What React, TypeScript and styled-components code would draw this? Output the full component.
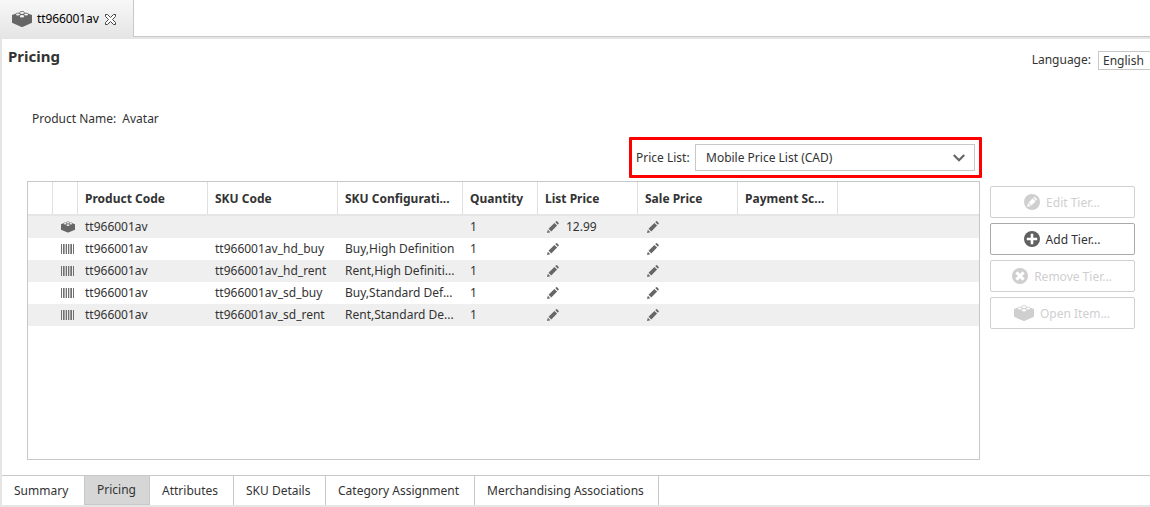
import React from "react";
import styled, { createGlobalStyle } from "styled-components";

const Global = createGlobalStyle`
  * { box-sizing: border-box; }
  body {
    margin: 0;
    background: #fff;
    color: #333;
    font: 12px/16px "Noto Sans", "Open Sans", sans-serif;
    overflow: hidden;
  }
`;

const Window = styled.div`
  width: 1150px;
  height: 507px;
  display: flex;
  flex-direction: column;
  overflow: hidden;
`;

const EditorTabs = styled.div`
  height: 39px;
  flex: none;
  display: flex;
  background: #e5e5e5;
`;

const EditorTab = styled.div`
  width: 134px;
  height: 37px;
  display: flex;
  align-items: center;
  padding: 1px 0 0 12px;
  border-right: 1px solid #c8c8c8;
  background: linear-gradient(#f8f8f8, #e5e5e5);
  color: #000;
  svg { flex: none; }
`;

const EditorTabLabel = styled.span`
  flex: none;
  width: 73px;
  padding-left: 5px;
  white-space: nowrap;
  letter-spacing: -0.1px;
`;

const TabStripRest = styled.div`
  flex: 1;
  height: 37px;
  background: #fff;
  border-bottom: 1px solid #c8c8c8;
`;

const Editor = styled.div`
  flex: 1;
  min-height: 0;
  display: flex;
  flex-direction: column;
  border-left: 2px solid #e5e5e5;
  border-bottom: 2px solid #e5e5e5;
`;

const TitleRow = styled.div`
  height: 72px;
  display: flex;
  justify-content: space-between;
  padding-left: 6px;
`;

const Title = styled.h1`
  margin: 7px 0 0;
  font-size: 15px;
  line-height: 20px;
  font-weight: 700;
`;

const Language = styled.div`
  display: flex;
  height: 20px;
  margin-top: 12px;
  gap: 7px;
  line-height: 18px;
`;

const LanguageBox = styled.div`
  width: 52px;
  height: 19px;
  padding-left: 4px;
  border: 1px solid #c8c8c8;
  border-right: 0;
`;

const ProductName = styled.div`
  display: flex;
  gap: 6px;
  height: 26px;
  padding-left: 30px;
`;

const PriceListFrame = styled.div`
  width: 353px;
  height: 41px;
  margin-left: 627px;
  display: flex;
  align-items: center;
  justify-content: space-between;
  padding: 0 4px;
  border: 3px solid #fe0000;
  border-radius: 1px;
`;

const Combo = styled.div`
  width: 280px;
  height: 27px;
  display: flex;
  align-items: center;
  justify-content: space-between;
  padding: 0 9px 0 10px;
  border: 1px solid #c8c8c8;
`;

const Main = styled.div`
  display: flex;
  gap: 10px;
  height: 282px;
  padding: 3px 0 0 25px;
`;

const Table = styled.div`
  width: 953px;
  height: 279px;
  border: 1px solid #c8c8c8;
`;

const columns = "25px 25px 130px 130px 125px 75px 100px 100px 100px 1fr";

const HeaderRow = styled.div`
  display: grid;
  grid-template-columns: ${columns};
  height: 34px;
  border-bottom: 2px solid #e5e5e5;
  font-weight: 700;
`;

const HeaderCell = styled.div<{ $last?: boolean }>`
  padding: 9px 6px 0 7px;
  border-right: ${(p) => (p.$last ? "0" : "1px solid #e0e0e0")};
  white-space: nowrap;
  overflow: hidden;
`;

const Row = styled.div<{ $shaded: boolean }>`
  display: grid;
  grid-template-columns: ${columns};
  height: 22px;
  background: ${(p) => (p.$shaded ? "#efefef" : "#fff")};
`;

const Cell = styled.div`
  display: flex;
  align-items: center;
  padding-left: 7px;
  white-space: nowrap;
  overflow: hidden;
`;

const IconCell = styled(Cell)`
  padding-left: 8px;
`;

const PriceCell = styled(Cell)`
  gap: 7px;
  padding-left: 9px;
`;

const Actions = styled.div`
  display: flex;
  flex-direction: column;
  gap: 5px;
  padding-top: 5px;
`;

const ActionButton = styled.button`
  width: 145px;
  height: 32px;
  display: flex;
  align-items: center;
  justify-content: center;
  gap: 6px;
  padding: 0 1px 0 0;
  border: 1px solid #aaa;
  border-radius: 2px;
  background: #fff;
  color: #333;
  font: inherit;
  &:disabled {
    border-color: #d0d0d0;
    color: #cfcfcf;
  }
`;

const ActionLabel = styled.span`
  padding-top: 2px;
`;

const PageTabs = styled.div`
  display: flex;
  height: 30px;
  margin-top: 15px;
  border-top: 1px solid #c8c8c8;
`;

const PageTab = styled.div<{ $width: number; $active?: boolean }>`
  width: ${(p) => p.$width}px;
  height: 29px;
  padding: ${(p) => (p.$active ? 6 : 7)}px 0 0 12px;
  border-right: 1px solid #c8c8c8;
  border-bottom: ${(p) => (p.$active ? "1px solid #c8c8c8" : "0")};
  background: ${(p) => (p.$active ? "#d6d6d6" : "#fff")};
  white-space: nowrap;
`;

function BrickIcon({ width = 20, height = 16, color = "#666", gap = "#f2f2f2" }) {
  return (
    <svg width={width} height={height} viewBox="0 0 20 16">
      <path
        d="M0 4 3.600 2.800Q4.300 1.500 6.300 1.800L7.600 1.400Q8 0 10 0T12.400 1.400L13.700 1.800Q15.700 1.500 16.400 2.800L20 4v7.800L10.500 16h-1L0 11.800z"
        fill={color}
      />
      <g fill={gap}>
        <ellipse cx="10" cy="1.900" rx="2" ry="1.100" />
        <ellipse cx="5.900" cy="3.500" rx="2" ry="1.100" />
        <ellipse cx="14.100" cy="3.500" rx="2" ry="1.100" />
        <ellipse cx="10" cy="5.200" rx="2.200" ry="1.200" />
      </g>
    </svg>
  );
}

function BarcodeIcon() {
  return (
    <svg width="13" height="10" viewBox="0 0 13 10" fill="#707070">
      <path d="M0 0h1v10H0zM2 0h1.600v10H2zM4.700 0h1.300v10H4.700zM7 0h1.300v10H7zM9.300 0h1.700v10H9.300zM12 0h1v10h-1z" />
    </svg>
  );
}

function PencilIcon() {
  return (
    <svg width="12" height="12" viewBox="0 0 12 12" fill="#666">
      <path d="M0 12 .8 8.700 3.300 11.200zM1.500 7.700 7.400 1.900 10.100 4.600 4.300 10.500zM8.200 1.100 9.300.2Q9.700-.1 10.100.3L11.700 1.900Q12 2.300 11.700 2.700L10.900 3.800z" />
    </svg>
  );
}

function CircleIcon({ kind, color }: { kind: "edit" | "add" | "remove"; color: string }) {
  return (
    <svg width="16" height="16" viewBox="0 0 16 16">
      <circle cx="8" cy="8" r="8" fill={color} />
      {kind === "add" && <path d="M8 2.800v10.400M2.800 8h10.400" stroke="#fff" strokeWidth="2.600" />}
      {kind === "remove" && <path d="m4.400 4.400 7.200 7.200m0-7.200-7.200 7.200" stroke="#fff" strokeWidth="3" />}
      {kind === "edit" && (
        <path d="m3.200 12.800.8-3.700 2.900 2.900zM4.600 8.500l4.200-4.200 2.900 2.900-4.200 4.200zM9.500 3.700l1-.9 2.800 2.800-.9 1z" fill="#fff" />
      )}
    </svg>
  );
}

function CloseIcon() {
  return (
    <svg width="11" height="11" viewBox="0 0 11 11" fill="#fff" stroke="#444">
      <path d="M.5.500h2l3 3 3-3h2v2l-3 3 3 3v2h-2l-3-3-3 3h-2v-2l3-3-3-3z" />
    </svg>
  );
}

const headers = ["", "", "Product Code", "SKU Code", "SKU Configurati...", "Quantity", "List Price", "Sale Price", "Payment Sc...", ""];

const rows = [
  { sku: "", config: "", price: "12.99" },
  { sku: "tt966001av_hd_buy", config: "Buy,High Definition", price: "" },
  { sku: "tt966001av_hd_rent", config: "Rent,High Definiti...", price: "" },
  { sku: "tt966001av_sd_buy", config: "Buy,Standard Def...", price: "" },
  { sku: "tt966001av_sd_rent", config: "Rent,Standard De...", price: "" },
];

const pageTabs = [
  { label: "Summary", width: 83 },
  { label: "Pricing", width: 65, active: true },
  { label: "Attributes", width: 84 },
  { label: "SKU Details", width: 92 },
  { label: "Category Assignment", width: 149 },
  { label: "Merchandising Associations", width: 184 },
];

export default function App() {
  return (
    <Window>
      <Global />
      <EditorTabs>
        <EditorTab>
          <BrickIcon />
          <EditorTabLabel>tt966001av</EditorTabLabel>
          <CloseIcon />
        </EditorTab>
        <TabStripRest />
      </EditorTabs>
      <Editor>
        <TitleRow>
          <Title>Pricing</Title>
          <Language>
            <span>Language:</span>
            <LanguageBox>English</LanguageBox>
          </Language>
        </TitleRow>
        <ProductName>
          <span>Product Name:</span>
          <span>Avatar</span>
        </ProductName>
        <PriceListFrame>
          <span>Price List:</span>
          <Combo>
            <span>Mobile Price List (CAD)</span>
            <svg width="12" height="8" viewBox="0 0 12 8" fill="none" stroke="#666" strokeWidth="2.200">
              <path d="m.8 1 5.200 5.200L11.200 1" />
            </svg>
          </Combo>
        </PriceListFrame>
        <Main>
          <Table>
            <HeaderRow>
              {headers.map((h, i) => (
                <HeaderCell key={i} $last={i === headers.length - 1}>{h}</HeaderCell>
              ))}
            </HeaderRow>
            {rows.map((r, i) => (
              <Row key={i} $shaded={i % 2 === 0}>
                <Cell />
                <IconCell>{i === 0 ? <BrickIcon width={14} height={12} gap="#efefef" /> : <BarcodeIcon />}</IconCell>
                <Cell>tt966001av</Cell>
                <Cell>{r.sku}</Cell>
                <Cell>{r.config}</Cell>
                <Cell>1</Cell>
                <PriceCell><PencilIcon />{r.price}</PriceCell>
                <PriceCell><PencilIcon /></PriceCell>
              </Row>
            ))}
          </Table>
          <Actions>
            <ActionButton disabled><CircleIcon kind="edit" color="#cfcfcf" /><ActionLabel>Edit Tier...</ActionLabel></ActionButton>
            <ActionButton><CircleIcon kind="add" color="#606060" /><ActionLabel>Add Tier...</ActionLabel></ActionButton>
            <ActionButton disabled><CircleIcon kind="remove" color="#cfcfcf" /><ActionLabel>Remove Tier...</ActionLabel></ActionButton>
            <ActionButton disabled><BrickIcon color="#cfcfcf" gap="#fff" /><ActionLabel>Open Item...</ActionLabel></ActionButton>
          </Actions>
        </Main>
        <PageTabs>
          {pageTabs.map((t) => (
            <PageTab key={t.label} $width={t.width} $active={t.active}>{t.label}</PageTab>
          ))}
        </PageTabs>
      </Editor>
    </Window>
  );
}
